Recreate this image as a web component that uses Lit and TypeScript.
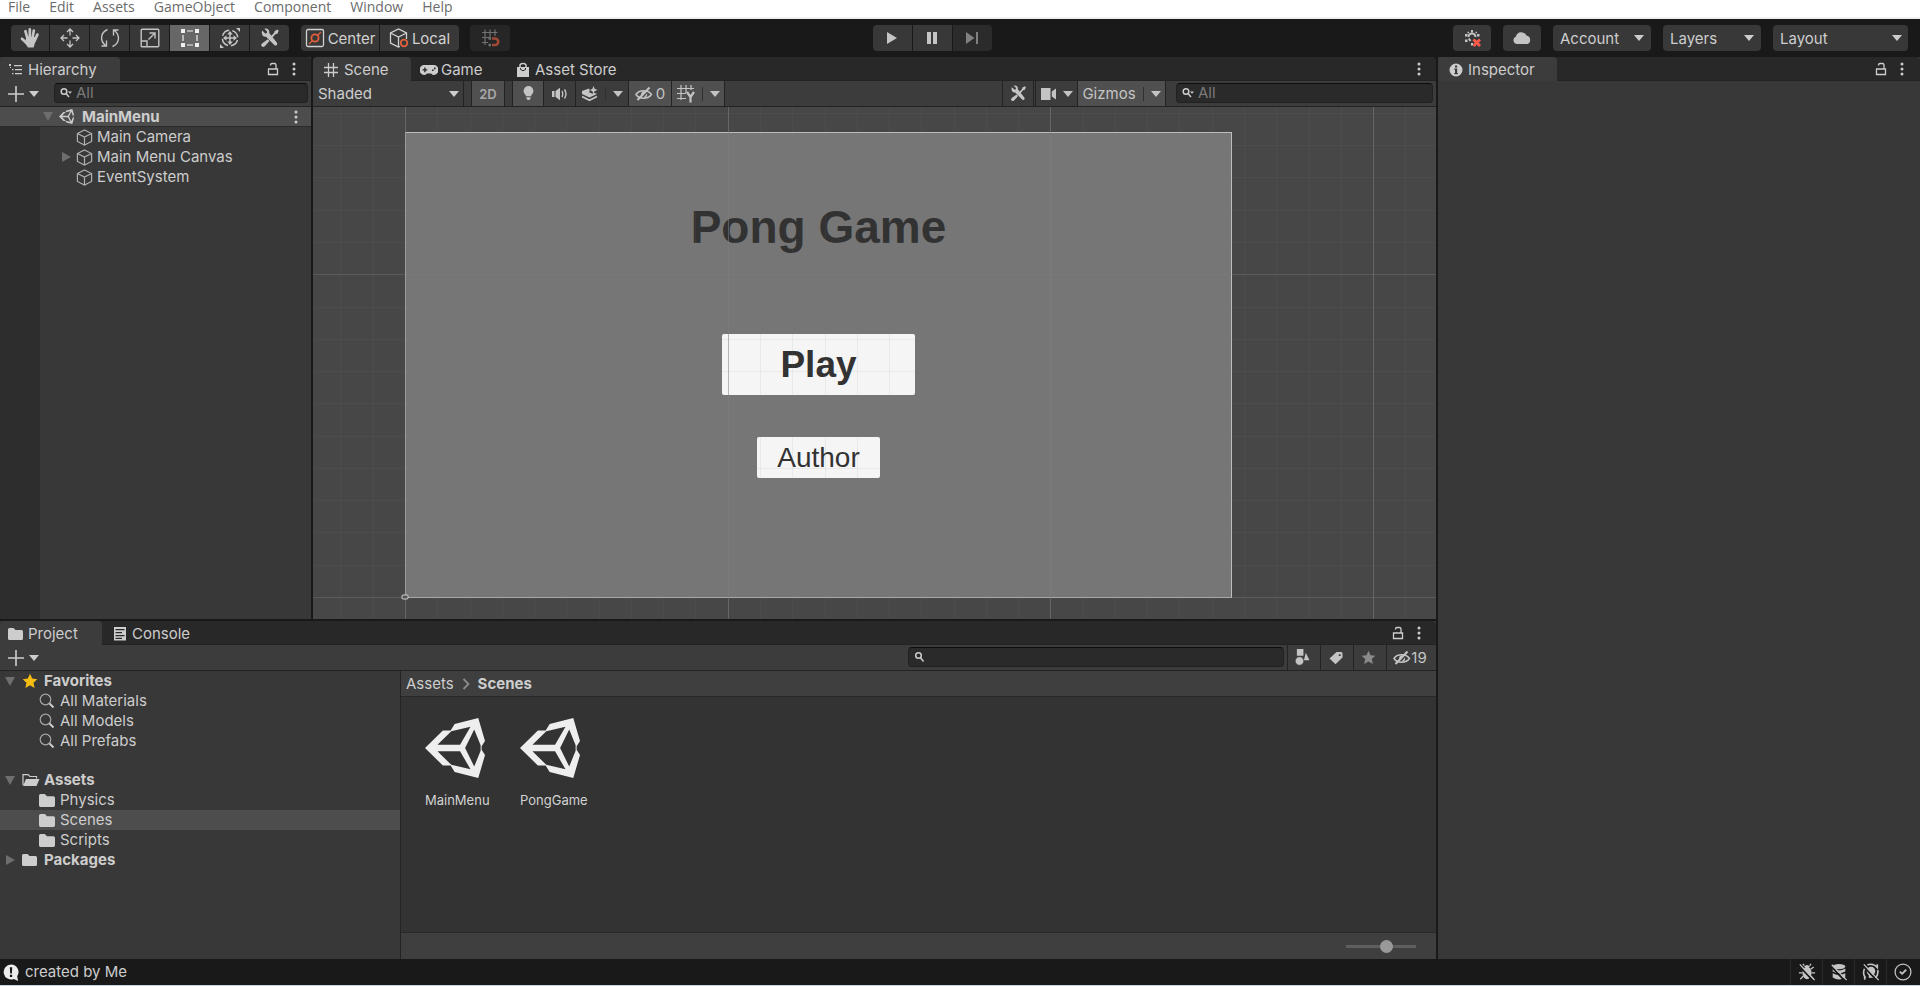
import { LitElement, html, css, svg, nothing, TemplateResult } from "lit";
import { customElement, property, state } from "lit/decorators.js";
import { classMap } from "lit/directives/class-map.js";

const wrench = svg`
  <path d="M2.2 2.6l3 2.8 1.6-.2.3-1.8L4.4.8C7.400-.2 9.800 2 9.200 5l7.600 9.600c1.400 1.800-.8 4-2.500 2.500L6 8.700C3.200 9.500.8 6 2.200 2.600z"/>
  <path d="M17.500 1.500l1.200 1.200-1.300 3-2 .6-3.600 3.900-1.500-1.500 3.700-3.800.7-2zM7.800 11.300l1.700 1.700-4.700 5.200c-1 1-2.300.9-3 .1s-.8-2 .2-2.900z"/>`;

const logo = svg`
  <path fill-rule="evenodd" d="M0 89L53 37H76L88 18 158 0 178 68 168 84 168 94 178 110 158 178 88 160 76 141H53zM37 79H104L135 26 78 39zM37 99H104L135 152 78 139zM119 89L146 144 165 97V81L146 34z"/>`;

const folder = svg`<path d="M0 2.500Q0 1 1.500 1H5.500L7.500 3H13.500Q15 3 15 4.500V11.500Q15 13 13.500 13H1.500Q0 13 0 11.500z"/>`;

const eye = svg`
  <g fill="none" stroke="currentColor" stroke-width="1.500">
    <path d="M1 8.500C4 3.500 13 3.500 16.500 8.500 13 13.500 4 13.500 1 8.500z"/><path d="M2.500 14L14.500 1.500" stroke-width="2"/></g>
  <path d="M6 8.500a3 3.200 0 0 1 5-2.400L7 10.600zM12 7.500a3 3.200 0 0 1-3.500 4.200z"/>`;

/** Glyph table: [viewBox width, viewBox height, content]. */
const glyphs: Record<string, [number, number, TemplateResult | unknown]> = {
  hand: [20, 20, svg`
    <g fill="none" stroke="currentColor" stroke-width="2.700" stroke-linecap="round">
      <path d="M5.400 3.200L7.600 11M9.800 1.400V11M13.800 2.600L12.400 11M17.400 6.600L14.600 13M2 10.800L7 15.500"/></g>
    <path d="M6.200 9H15L15.800 12 13.600 19.500H8L5 15z"/>`],
  move: [20, 20, svg`
    <g fill="none" stroke="currentColor" stroke-width="1.300">
      <path d="M10 7.500V1.500M10 12.500V18.500M7.500 10H1.500M12.500 10H18.500M7 4L10 1 13 4M7 16L10 19 13 16M4 7L1 10 4 13M16 7L19 10 16 13"/></g>`],
  rotate: [20, 20, svg`
    <g fill="none" stroke="currentColor" stroke-width="1.400">
      <path d="M7.500 1.500C.5 4.500-.5 12.500 5.500 17.500M1.500 18H6.500V12.500M12.500 18.500C19.500 15.500 20.500 7.500 14.500 2.500M18.500 2H13.500V7.500"/></g>`],
  scale: [20, 20, svg`
    <g fill="none" stroke="currentColor" stroke-width="1.400">
      <rect x="1.200" y="1.200" width="17.600" height="17.600" rx="1"/><path d="M1.500 13H7V18.500M8.500 11.500L14.500 5.500M9.500 5H15V10.500"/></g>`],
  rect: [20, 20, svg`
    <path d="M1 1H5V5H1zM15 1H19V5H15zM1 15H5V19H1zM15 15H19V19H15z"/>
    <path fill="none" stroke="currentColor" stroke-width="1.200" d="M7 3H13M7 17H13M3 7V13M17 7V13"/>`],
  transform: [20, 20, svg`
    <circle cx="10" cy="10" r="7.700" fill="none" stroke="currentColor" stroke-width="1.500" stroke-dasharray="9 3.100" stroke-dashoffset="-2"/>
    <path fill="none" stroke="currentColor" stroke-width="1.500" d="M10 5V15M5 10H15"/>
    <path d="M10 3L12.800 6.500H7.200zM10 17L12.800 13.500H7.200zM3 10L6.500 7.200V12.800zM17 10L13.500 7.200V12.800zM16 0H20V4zM0 16V20H4z"/>`],
  tools: [20, 20, wrench],
  center: [20, 20, svg`
    <rect x="1.500" y="1.500" width="17" height="17" rx="1.500" fill="none" stroke="currentColor" stroke-width="1.300"/>
    <g fill="none" stroke="#e0603c" stroke-width="1.800"><circle cx="10" cy="10" r="3.600"/><path stroke-width="1.300" d="M4 16L7.300 12.700M12.700 7.300L16 4"/></g>`],
  local: [20, 20, svg`
    <path fill="none" stroke="currentColor" stroke-width="1.300" d="M11 18.500L9.500 19 1.500 15V5L9.500 1 17.500 5V11M1.500 5L9.500 9 17.500 5M9.500 9V18.500"/>
    <circle cx="15" cy="15" r="3.300" fill="#383838" stroke="#e0603c" stroke-width="1.800"/>`],
  snap: [20, 20, svg`
    <path fill="none" stroke="currentColor" stroke-width="1.200" d="M5 1.500V17M10 1.500V10M15 1.500V8M2 4.500H17.500M2 9.500H10M2 14.500H8"/>
    <path fill="none" stroke="#a04a34" stroke-width="2.600" d="M12 10.500H15a3.200 3.200 0 0 1 0 6.500H12"/>
    <path d="M8.500 9.200H11V11.800H8.500zM8.500 15.700H11V18.300H8.500z"/>`],
  play: [12, 14, svg`<path d="M1 1L11 7 1 13z"/>`],
  pause: [12, 14, svg`<path d="M1 1H5V13H1zM7 1H11V13H7z"/>`],
  step: [14, 14, svg`<path d="M1 1L9.500 7 1 13zM11 1H13V13H11z"/>`],
  caret: [10, 6, svg`<path d="M0 0H10L5 6z"/>`],
  collab: [20, 20, svg`
    <path fill="none" stroke="currentColor" stroke-width="2" d="M6.500 9a3.500 3.500 0 0 1 7 0M6.800 10.500L8.500 13"/>
    <path d="M9 2H11V4.500H9zM3 6H5.500V8.500H3zM3 11.500H5.500V14H3zM15 6H17.500V8.500H15zM9 15H11V17.500H9zM5.500 3.800H7V5.300H5.500zM13.500 3.800H15V5.300H13.500z"/>
    <path fill="none" stroke="#ff5a4a" stroke-width="2.800" d="M11.500 11.500L18 18M18 11.500L11.500 18"/>`],
  cloud: [20, 14, svg`<path d="M4.500 13a4 4 0 0 1-.6-7.600A5.600 5.600 0 0 1 14.400 4.600 4.400 4.400 0 0 1 15.500 13z"/>`],
  tree: [14, 12, svg`<path d="M0 0H2V2H0zM5 1H13V2.300H5zM3 5H4.500V6.300H3zM6 5H13V6.300H6zM3 9H4.500V10.300H3zM6 9H13V10.300H6zM1 3H2V4H1z"/>`],
  lock: [12, 14, svg`<path fill="none" stroke="currentColor" stroke-width="1.300" d="M1.500 7H10.500V12.500H1.500zM9 7V3Q9 1.500 7.500 1.500H5Q3.500 1.500 3.500 3.500"/>`],
  dots: [4, 14, svg`<circle cx="2" cy="2" r="1.500"/><circle cx="2" cy="7" r="1.500"/><circle cx="2" cy="12" r="1.500"/>`],
  plus: [16, 16, svg`<path d="M7.200 0H8.800V7.200H16V8.800H8.800V16H7.200V8.800H0V7.200H7.200z"/>`],
  find: [12, 12, svg`<g fill="none" stroke="currentColor" stroke-width="1.500"><circle cx="4" cy="4.500" r="2.800"/><path d="M6 6.500L9 10"/></g><path d="M8 4.500H12L10 6.800z"/>`],
  findPlain: [12, 12, svg`<g fill="none" stroke="currentColor" stroke-width="1.500"><circle cx="4.500" cy="4.500" r="2.800"/><path d="M6.500 6.800L9.500 10.500"/></g>`],
  magnifier: [16, 16, svg`<g fill="none" stroke="currentColor"><circle cx="6.500" cy="6.500" r="5.300" stroke-width="1.200" stroke-opacity=".75"/><path d="M10.500 10.500L14.500 14.500" stroke-width="2"/></g>`],
  hash: [14, 14, svg`<path fill="none" stroke="currentColor" stroke-width="1.300" d="M4.500 0V14M9.500 0V14M0 4.500H14M0 9.500H14"/>`],
  gamepad: [18, 12, svg`<path fill-rule="evenodd" d="M4.500 1H13.500a4.500 4.800 0 0 1 .5 10Q12.500 11 11 9.500H7Q5.500 11 4 11A4.500 4.800 0 0 1 4.500 1zM4.200 3.500V5.200H2.500V6.600H4.200V8.300H5.600V6.600H7.300V5.200H5.600V3.500zM12 5.500h1.600V7.100H12zM14 3.600h1.600v1.600H14z"/>`],
  bag: [14, 16, svg`<path d="M1 5H13V15H1z"/><path fill="none" stroke="currentColor" stroke-width="1.500" d="M4 8V3.500Q4 1.500 7 1.500T10 3.500V8"/><path fill="none" stroke="#282828" d="M4.500 6V7.500Q7 10 9.500 7.500V6"/>`],
  bulb: [14, 16, svg`<path d="M7 0a5.300 5.300 0 0 1 3 9.600V11H4V9.600A5.300 5.300 0 0 1 7 0zM4.800 12H9.200V13.500L8 15H6L4.800 13.500z"/>`],
  audio: [16, 14, svg`<path d="M0 4H2.500V10H0zM3.500 4L8 .8V13.200L3.500 10z"/><path fill="none" stroke="currentColor" stroke-width="1.400" d="M10 4Q11.500 7 10 10M12.500 2.500Q15.500 7 12.500 11.500"/>`],
  layers: [16, 16, svg`<path d="M0 5L7 2.500 8 5 6.500 6 10 7.500 13 7 15 8 7.500 11.500 0 8zM11.500 0L12.600 2.800 15.500 4 12.600 5.200 11.500 8 10.400 5.200 8 4 10.400 2.800z"/><path fill="none" stroke="currentColor" stroke-width="1.800" d="M0 10.500L7.500 14.200 15 10.500"/>`],
  eye: [18, 16, eye],
  gridY: [18, 18, svg`<path fill="none" stroke="currentColor" stroke-width="1.200" d="M4 0V15M9 0V8M14 0V5M0 3.500H17M0 8.500H9M0 13.500H9"/><path fill="none" stroke="currentColor" stroke-width="2.200" d="M10 7L13.500 12 17 7M13.500 11.500V17.500"/>`],
  camera: [16, 12, svg`<path d="M0 0H9.500V12H0zM10.800 3.500L15 .5V11.500L10.800 8.500z"/>`],
  info: [14, 14, svg`<path fill-rule="evenodd" d="M7 .5a6.500 6.500 0 1 1 0 13 6.500 6.500 0 0 1 0-13zM6 2.500V4.500H8.200V2.500zM5.300 5.500V6.700H6V10H5.300V11.200H8.900V10H8.200V5.500z"/>`],
  logo: [178, 178, logo],
  cube: [18, 18, svg`<path fill="none" stroke="currentColor" stroke-width="1.300" d="M9 1L16.500 4.800V13.200L9 17 1.500 13.200V4.800zM1.500 4.800L9 8.500 16.500 4.800M9 8.500V17"/>`],
  down: [10, 9, svg`<path d="M0 0H10L5 9z"/>`],
  right: [10, 10, svg`<path d="M1 0V10L10 5z"/>`],
  folder: [15, 14, folder],
  folderOpen: [18, 14, svg`<path fill="none" stroke="currentColor" stroke-width="1.200" d="M1 12V1.600H6L8 3.500H14.500V5.500"/><path d="M4 6H17.500L14.500 13H1z"/>`],
  console: [14, 14, svg`<path fill-rule="evenodd" d="M1 0H13V13.500H1zM2.500 2V3.200H11.500V2zM2.500 5V6.200H9V5zM2.500 8V9.200H11.500V8zM2.500 10.800V12H9V10.800z"/>`],
  star: [16, 16, svg`<path d="M8 .8L10.200 5.600 15.300 6.200 11.500 9.700 12.600 14.900 8 12.300 3.400 14.900 4.500 9.700.7 6.200 5.800 5.600z"/>`],
  shapes: [16, 18, svg`<path d="M2 0H9V7H2zM11.500 4L15.500 12H9.500z"/><circle cx="4.800" cy="12.700" r="4.500" stroke="#3c3c3c" stroke-width=".6"/>`],
  tag: [14, 14, svg`<path fill-rule="evenodd" d="M7.500 1H12.500L13.500 2V6.500L6.500 13.200.5 7.500zM9.800 3.200V5H11.600V3.200z"/>`],
  chevron: [8, 12, svg`<path fill="none" stroke="#8c8c8c" stroke-width="1.800" d="M1.500 1L6.500 6 1.500 11"/>`],
  alert: [18, 18, svg`<path fill-rule="evenodd" d="M8.500.5a8 8 0 0 1 6.500 12.500L16 18 11.500 16A8 8 0 1 1 8.500.5zM7.200 3.500L7.600 10H9.400L9.800 3.500zM7.300 11.500V13.700H9.700V11.500z"/>`],
  bug: [20, 20, svg`
    <ellipse cx="10" cy="11" rx="5" ry="7"/><path d="M6.500 4.500Q10 0 13.500 4.500z"/>
    <path fill="none" stroke="currentColor" stroke-width="1.500" d="M6 7L2.500 4.500M14 7L17.500 4.500M5 11H1M15 11H19M6 14.500L2.500 18M14 14.500L17.500 18M7 3L5.500 1M13 3L14.500 1"/>
    <path fill="none" stroke="#191919" stroke-width="2" d="M1 3L17 20"/><path fill="none" stroke="currentColor" stroke-width="1.500" d="M2 1.500L18.500 19"/>`],
  stack: [20, 20, svg`
    <ellipse cx="10" cy="4" rx="7" ry="3"/><path d="M3 6Q10 10.500 17 6V9.500Q10 13 3 9.500zM3 11.500Q10 15.500 17 11.500V16Q10 20.500 3 16z"/>
    <path fill="none" stroke="#191919" stroke-width="2" d="M1 3.500L17 20.500"/><path fill="none" stroke="currentColor" stroke-width="1.500" d="M2 2L18.500 19"/>`],
  progress: [20, 20, svg`
    <circle cx="10" cy="9" r="4.800"/><path d="M7.500 13H12.500V16.500H7.500z"/>
    <path fill="none" stroke="currentColor" stroke-width="1.800" d="M6 2Q13 0 17 5V1.500M3 6Q0 12 4 16.500M3 18.500V15M17.500 8Q18.500 13 14.500 17"/>
    <path fill="none" stroke="#191919" stroke-width="2" d="M1 3L17 20"/><path fill="none" stroke="currentColor" stroke-width="1.500" d="M2 1.500L18.500 19"/>`],
  check: [20, 20, svg`<g fill="none" stroke="currentColor"><circle cx="10" cy="10" r="8.800" stroke-width="1.400"/><path stroke-width="2" d="M6.500 9.500L9 12 13.500 7.500"/></g>`],
};

const icon = (name: string, width?: number, cls = "") => {
  const [w, h, body] = glyphs[name];
  const drawn = width ?? w;
  return html`<svg class="icon ${cls}" aria-hidden="true" width=${drawn} height=${Math.round((drawn * h) / w)}
    viewBox="0 0 ${w} ${h}" fill="currentColor">${body}</svg>`;
};

const shared = css`
  * { box-sizing: border-box; }
  button, input, select { font: inherit; color: inherit; margin: 0; padding: 0; border: 0; background: none; border-radius: 0; outline-offset: -2px; }
  a { color: inherit; text-decoration: none; }
  ul { list-style: none; margin: 0; padding: 0; }
  .icon { display: block; flex: none; }
  .spacer { flex: 1; }
  .tabs { display: flex; align-items: center; height: 24px; flex: none; background: linear-gradient(#282828 23px, #232323 23px); border-radius: 4px 4px 0 0; }
  .tab { display: flex; align-items: center; height: 24px; padding-top: 2px; gap: 5px; border-radius: 4px 4px 0 0; white-space: nowrap; }
  .tab.active { background: #3c3c3c; }
  .bar { display: flex; align-items: center; height: 26px; flex: none; background: #3c3c3c; border-bottom: 1px solid #232323; }
  .tool { display: flex; align-items: center; justify-content: center; height: 25px; border: solid #232323; border-width: 0 1px; color: #c4c4c4; }
  .tool.on { background: #505050; }
  .search { display: flex; align-items: center; gap: 4px; height: 20px; padding: 0 5px; background: #2a2a2a; border: 1px solid #212121; border-top-color: #0d0d0d; border-radius: 4px; }
  .search input { flex: 1; min-width: 0; width: 100%; height: 18px; }
  .search input::placeholder { color: #7a7a7a; opacity: 1; }
  .iconbtn { display: grid; place-items: center; height: 24px; width: 16px; }
  .iconbtn + .iconbtn { margin-left: 5px; }
  .add { display: flex; align-items: center; gap: 5px; padding-left: 8px; width: 40px; height: 25px; }
  .row { display: flex; align-items: center; height: 20px; width: 100%; white-space: nowrap; text-align: left; }
  .strong { font-weight: 700; }
  .dim { color: #6e6e6e; }
`;

@customElement("drop-down")
class DropDown extends LitElement {
  static styles = [shared, css`
    :host { display: grid; align-items: center; }
    select { grid-area: 1 / 1; appearance: none; width: 100%; height: 100%; padding: var(--drop, 0) 0 0 var(--inset, 7px); }
    .icon { grid-area: 1 / 1; justify-self: end; margin-right: var(--caret-inset, 7px); pointer-events: none; }
    option { background: #383838; }
  `];
  @property() label = "";
  @property() value = "";
  render() {
    return html`<select aria-label=${this.label}><option>${this.value}</option></select>${icon("caret")}`;
  }
}

@customElement("main-toolbar")
class MainToolbar extends LitElement {
  @state() private active = "rect";
  static styles = [shared, css`
    :host { display: flex; align-items: center; height: 38px; padding: 0 12px 0 11px; background: #191919; }
    .side { flex: 1; display: flex; align-items: center; }
    .right { justify-content: flex-end; gap: 12px; }
    .group { display: flex; gap: 1px; border-radius: 4px; overflow: hidden; }
    .group button, .single { display: flex; align-items: center; justify-content: center; gap: 3px; height: 26px; background: #383838; color: #c4c4c4; }
    .group button.on { background: #676767; color: #f0f0f0; }
    .tools button { width: 39px; }
    .tools button:first-child { width: 38px; }
    .pivot { margin-left: 12px; }
    .pivot button { width: 79px; color: #d2d2d2; }
    .pivot button:first-child { width: 78px; }
    .pivot span { padding-top: 2px; }
    .run { margin-right: 55px; }
    .run button { width: 39px; }
    .run .off { background: #2b2b2b; color: #808080; }
    .single { width: 38px; border-radius: 4px; }
    .snap { width: 40px; margin-left: 11px; background: #262626; color: #707070; }
    drop-down { width: 98px; height: 26px; border-radius: 4px; background: #383838; --drop: 2px; }
    .wide { width: 135px; --caret-inset: 6px; }
  `];
  render() {
    const tools = ["hand", "move", "rotate", "scale", "rect", "transform", "tools"];
    return html`
      <div class="side">
        <div class="group tools">${tools.map((t) => html`
          <button class=${classMap({ on: this.active === t })} aria-label="${t} tool" @click=${() => (this.active = t)}>${icon(t)}</button>`)}
        </div>
        <div class="group pivot"><button>${icon("center")}<span>Center</span></button><button>${icon("local")}<span>Local</span></button></div>
        <button class="single snap" aria-label="Grid snapping">${icon("snap")}</button>
      </div>
      <div class="group run">
        <button aria-label="Play">${icon("play")}</button><button aria-label="Pause">${icon("pause")}</button>
        <button class="off" aria-label="Step">${icon("step")}</button>
      </div>
      <div class="side right">
        <button class="single" aria-label="Collaborate">${icon("collab")}</button>
        <button class="single" aria-label="Cloud services">${icon("cloud")}</button>
        <drop-down label="Account menu" value="Account"></drop-down>
        <drop-down label="Layers menu" value="Layers"></drop-down>
        <drop-down class="wide" label="Layout menu" value="Layout"></drop-down>
      </div>`;
  }
}

@customElement("hierarchy-panel")
class HierarchyPanel extends LitElement {
  static styles = [shared, css`
    :host { display: flex; flex-direction: column; background: #383838; }
    .tab { width: 120px; padding-left: 9px; }
    .tabs { padding-right: 9px; }
    .search { flex: 1; margin: 0 3px 1px 14px; }
    .scene { background: #4d4d4d; border-bottom: 1px solid #2b2b2b; padding: 0 13px 0 43px; gap: 6px; }
    .scene .name { margin-left: 2px; }
    .body { flex: 1; background: linear-gradient(90deg, #2d2d2d 40px, #383838 40px); }
    .object { padding-left: 61px; }
    .object .cube { margin: 0 4px 0 1px; color: #b0b0b0; }
    .slot { width: 14px; }
  `];
  render() {
    const objects = [["Main Camera", false], ["Main Menu Canvas", true], ["EventSystem", false]] as const;
    return html`
      <div class="tabs"><button class="tab active">${icon("tree")}Hierarchy</button><span class="spacer"></span>
        <button class="iconbtn" aria-label="Lock">${icon("lock")}</button><button class="iconbtn" aria-label="Hierarchy options">${icon("dots")}</button></div>
      <div class="bar"><button class="add" aria-label="Create">${icon("plus")}${icon("caret")}</button>
        <label class="search">${icon("find")}<input type="text" placeholder="All" aria-label="Search hierarchy"></label></div>
      <div class="row scene">${icon("down", 10, "dim")}${icon("logo", 15)}<span class="strong name">MainMenu</span><span class="spacer"></span>${icon("dots")}</div>
      <ul class="body">${objects.map(([name, nested]) => html`
        <li><button class="row object"><span class="slot">${nested ? icon("right", 10, "dim") : nothing}</span>${icon("cube", 17, "cube")}${name}</button></li>`)}
      </ul>`;
  }
}

@customElement("scene-panel")
class ScenePanel extends LitElement {
  static styles = [shared, css`
    :host { display: flex; flex-direction: column; min-width: 0; }
    .tab { padding: 2px 10px 0; }
    .first { width: 98px; padding-left: 11px; gap: 6px; }
    .game { width: 95px; gap: 3px; padding-left: 9px; }
    .tabs { padding-right: 9px; }
    .shading { width: 151px; height: 25px; border-right: 1px solid #232323; --inset: 5px; --caret-inset: 4px; }
    .left, .right { display: flex; }
    .right { margin-left: auto; align-items: center; }
    .two { width: 34px; margin: 0 7px; font-size: 13px; font-weight: 600; color: #a8a8a8; }
    .narrow { width: 32px; }
    .narrow + .narrow { border-left: 0; }
    .split { width: 53px; gap: 7px; border-left: 0; }
    .hidden { width: 43px; gap: 3px; border-left: 0; }
    .cam { width: 43px; gap: 6px; margin-left: 1px; }
    .gizmos { width: 88px; gap: 7px; border-left: 0; }
    .rule { width: 1px; height: 14px; background: #303030; }
    .search { width: 257px; margin: 0 3px 1px 10px; }
    .view { position: relative; flex: 1; overflow: hidden; background: #474747; }
    .grid { position: absolute; inset: 0; width: 100%; height: 100%; pointer-events: none; }
    .canvas { position: absolute; left: 92px; top: 25px; width: 827px; height: 466px; display: flex; flex-direction: column; align-items: center;
      background: #767676; border: 1px solid #bdbdbd; font-family: "Liberation Sans", Arial, sans-serif; color: #323232; }
    .title { margin: 68px 0 81px; font-size: 46px; line-height: 52px; font-weight: 700; }
    .canvas button { background: #f5f5f5; border-radius: 2px; }
    .start { width: 193px; height: 61px; font-size: 37px; font-weight: 700; }
    .author { width: 123px; height: 41px; margin-top: 42px; font-size: 28px; }
  `];
  private lines() {
    const step = 32.27;
    const out = [];
    for (let i = -2; i <= 31; i++) {
      const at = Math.round(92 + i * step) + 0.5;
      out.push(svg`<line x1=${at} x2=${at} y1="0" y2="100%" stroke="#808080" stroke-opacity=${i % 10 ? 0.1 : 0.55}/>`);
    }
    for (let i = 0; i <= 15; i++) {
      const at = Math.round(490 - i * step) + 0.5;
      out.push(svg`<line y1=${at} y2=${at} x1="0" x2="100%" stroke="#808080" stroke-opacity=${i % 10 ? 0.1 : 0.35}/>`);
    }
    return out;
  }
  render() {
    return html`
      <div class="tabs">
        <button class="tab first active">${icon("hash")}Scene</button>
        <button class="tab game">${icon("gamepad")}Game</button>
        <button class="tab">${icon("bag")}Asset Store</button>
        <span class="spacer"></span><button class="iconbtn" aria-label="Scene options">${icon("dots")}</button>
      </div>
      <div class="bar">
        <div class="left">
          <drop-down class="shading" label="Shading mode" value="Shaded"></drop-down>
          <button class="tool two on">2D</button>
          <button class="tool narrow on" aria-label="Scene lighting">${icon("bulb", 13)}</button>
          <button class="tool narrow" aria-label="Scene audio">${icon("audio")}</button>
          <button class="tool split" aria-label="Effects">${icon("layers")}<span class="rule"></span>${icon("caret")}</button>
          <button class="tool hidden on">${icon("eye")}0</button>
          <button class="tool split on" aria-label="Grid">${icon("gridY")}<span class="rule"></span>${icon("caret")}</button>
        </div>
        <div class="right">
          <button class="tool narrow" aria-label="Component tools">${icon("tools", 17)}</button>
          <button class="tool cam" aria-label="Scene camera">${icon("camera")}${icon("caret")}</button>
          <button class="tool gizmos on">Gizmos<span class="rule"></span>${icon("caret")}</button>
          <label class="search">${icon("find")}<input type="text" placeholder="All" aria-label="Search scene"></label>
        </div>
      </div>
      <div class="view">
        <div class="canvas">
          <h1 class="title">Pong Game</h1>
          <button class="start">Play</button>
          <button class="author">Author</button>
        </div>
        <svg class="grid" aria-hidden="true">${this.lines()}
          <rect x="89" y="488" width="6" height="4" rx="1" fill="#555" stroke="#d0d0d0"/></svg>
      </div>`;
  }
}

@customElement("project-panel")
class ProjectPanel extends LitElement {
  @state() private selected = "Scenes";
  static styles = [shared, css`
    :host { display: flex; flex-direction: column; background: #383838; }
    .tab { width: 102px; padding-left: 8px; }
    .tab + .tab { margin-left: 3px; }
    .tabs { padding-right: 9px; }
    .search { width: 376px; margin: 0 3px 1px auto; }
    .tool { width: 33px; border-right: 0; padding-right: 3px; }
    .count { width: 50px; }
    .faded { color: #8a8a8a; }
    .split { flex: 1; display: flex; min-height: 0; }
    .tree { width: 401px; flex: none; border-right: 1px solid #232323; }
    .group { margin-bottom: 19px; }
    .root { padding-left: 5px; }
    .root .lead { display: grid; width: 39px; grid-template-columns: 17px auto; align-items: center; justify-items: start; }
    .leaf { padding-left: 39px; gap: 5px; }
    .leaf.on { background: #4d4d4d; }
    .gold { color: #f5bd12; }
    .files { flex: 1; display: flex; flex-direction: column; min-width: 0; background: #333; }
    .crumbs { display: flex; align-items: center; gap: 8px; height: 26px; padding-left: 5px; background: #3f3f3f; border-bottom: 1px solid #282828; }
    .items { flex: 1; display: flex; align-items: flex-start; padding: 21px 24px; }
    .item { width: 95px; display: flex; flex-direction: column; align-items: flex-start; gap: 14px; font-size: 13px; line-height: 16px; color: #d2d2d2; }
    .item .icon { color: #eee; }
    .foot { display: flex; align-items: center; justify-content: flex-end; height: 27px; padding-right: 20px; background: #3f3f3f; border-top: 1px solid #282828; }
    .zoom { appearance: none; width: 70px; height: 14px; background: linear-gradient(#5e5e5e, #5e5e5e) center / 100% 3px no-repeat; }
    .zoom::-webkit-slider-thumb { appearance: none; width: 13px; height: 13px; border-radius: 50%; background: #999; }
  `];
  private root(name: string, glyph: string, open: boolean, tint = "") {
    return html`<button class="row root strong"><span class="lead">${icon(open ? "down" : "right", 10, "dim")}${icon(glyph, undefined, tint)}</span>${name}</button>`;
  }
  private leaf(name: string, glyph: string) {
    return html`<li><button class=${classMap({ row: true, leaf: true, on: this.selected === name })}
      @click=${() => (this.selected = name)}>${icon(glyph, 16)}${name}</button></li>`;
  }
  render() {
    return html`
      <div class="tabs"><button class="tab active">${icon("folder")}Project</button><button class="tab">${icon("console")}Console</button>
        <span class="spacer"></span><button class="iconbtn" aria-label="Lock">${icon("lock")}</button><button class="iconbtn" aria-label="Project options">${icon("dots")}</button></div>
      <div class="bar">
        <button class="add" aria-label="Create">${icon("plus")}${icon("caret")}</button>
        <label class="search">${icon("findPlain")}<input type="text" aria-label="Search project"></label>
        <button class="tool" aria-label="Filter by type">${icon("shapes", 15)}</button>
        <button class="tool" aria-label="Filter by label">${icon("tag")}</button>
        <button class="tool faded" aria-label="Save search">${icon("star", 15)}</button>
        <button class="tool count">${icon("eye")}19</button>
      </div>
      <div class="split">
        <nav class="tree">
          <div class="group">${this.root("Favorites", "star", true, "gold")}
            <ul>${["All Materials", "All Models", "All Prefabs"].map((n) => this.leaf(n, "magnifier"))}</ul></div>
          ${this.root("Assets", "folderOpen", true)}
          <ul>${["Physics", "Scenes", "Scripts"].map((n) => this.leaf(n, "folder"))}</ul>
          ${this.root("Packages", "folder", false)}
        </nav>
        <section class="files">
          <div class="crumbs"><a href="#">Assets</a>${icon("chevron")}<span class="strong">Scenes</span></div>
          <div class="items">${["MainMenu", "PongGame"].map((n) => html`<button class="item">${icon("logo", 60)}${n}</button>`)}</div>
          <div class="foot"><input class="zoom" type="range" min="0" max="100" value="60" aria-label="Icon size"></div>
        </section>
      </div>`;
  }
}

@customElement("inspector-panel")
class InspectorPanel extends LitElement {
  static styles = [shared, css`
    :host { display: flex; flex-direction: column; background: #383838; }
    .tab { width: 119px; padding-left: 11px; }
    .tabs { padding-right: 10px; }
  `];
  render() {
    return html`<div class="tabs"><button class="tab active">${icon("info")}Inspector</button><span class="spacer"></span>
      <button class="iconbtn" aria-label="Lock">${icon("lock")}</button><button class="iconbtn" aria-label="Inspector options">${icon("dots")}</button></div>`;
  }
}

@customElement("app-root")
class AppRoot extends LitElement {
  static styles = [shared, css`
    :host { display: flex; flex-direction: column; height: 100vh; background: #191919; color: #cdcdcd; font: 15px/20px Inter, "Liberation Sans", sans-serif; }
    .menu { display: flex; gap: 19px; height: 19px; padding: 0 8px; background: #fff; border-bottom: 2px solid #f0f0f0; color: #6b6b6b; font: 14px/14px "Open Sans", sans-serif; flex: none; }
    .menu button { height: 14px; }
    .work { flex: 1; display: grid; grid-template-columns: minmax(0, 1fr) 482px; gap: 2px; min-height: 0; }
    .main { display: grid; grid-template-columns: 311px minmax(0, 1fr); grid-template-rows: minmax(0, 1fr) 338px; gap: 2px; }
    .wide { grid-column: 1 / -1; }
    .status { display: flex; align-items: center; height: 27px; flex: none; border-bottom: 1px solid #cbd9e4; padding-left: 3px; gap: 5px; }
    .status .icon { color: #eee; }
    .status button { display: grid; place-items: center; width: 32px; height: 26px; border-left: 1px solid #282828; }
    .status button .icon { color: #c4c4c4; }
    .jobs { display: flex; margin-left: auto; padding-right: 2px; }
  `];
  render() {
    const menus = ["File", "Edit", "Assets", "GameObject", "Component", "Window", "Help"];
    const jobs = [["bug", "Debug mode"], ["stack", "Cache server"], ["progress", "Auto lighting"], ["check", "Background tasks"]];
    return html`
      <nav class="menu">${menus.map((m) => html`<button>${m}</button>`)}</nav>
      <main-toolbar></main-toolbar>
      <div class="work">
        <div class="main">
          <hierarchy-panel></hierarchy-panel>
          <scene-panel></scene-panel>
          <project-panel class="wide"></project-panel>
        </div>
        <inspector-panel></inspector-panel>
      </div>
      <footer class="status">${icon("alert", 17)}<span>created by Me</span>
        <div class="jobs">${jobs.map(([g, l]) => html`<button aria-label=${l}>${icon(g, 18)}</button>`)}</div></footer>`;
  }
}
